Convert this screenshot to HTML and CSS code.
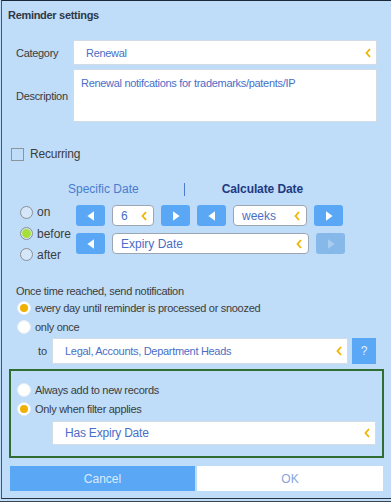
FILE: index.html
```html
<!DOCTYPE html>
<html>
<head>
<meta charset="utf-8">
<link rel="stylesheet" href="styles.css">
</head>
<body>
<div class="frame">
<div class="dialog">
  <div class="title">Reminder settings</div>

  <div class="field">
    <div class="label">Category</div>
    <div class="input sel"><span>Renewal</span><svg class="chev" viewBox="0 0 6 10"><path d="M5 1 L1.5 5 L5 9" /></svg></div>
  </div>
  <div class="field desc">
    <div class="label">Description</div>
    <div class="input area">Renewal notifcations for trademarks/patents/IP</div>
  </div>

  <div class="recurring">
    <span class="check"></span><span class="rtext">Recurring</span>
  </div>

  <div class="tabs">
    <span class="tab">Specific Date</span>
    <span class="sep"></span>
    <span class="tab active">Calculate Date</span>
  </div>

  <div class="datearea">
    <div class="radios">
      <div class="rrow"><span class="radio grey"></span>on</div>
      <div class="rrow"><span class="radio grey on"></span>before</div>
      <div class="rrow"><span class="radio grey"></span>after</div>
    </div>
    <div class="controls">
      <div class="crow">
        <span class="btn"><svg viewBox="0 0 10 10"><path d="M7.5 1 L2 5 L7.5 9Z"/></svg></span>
        <span class="box num"><span>6</span><svg class="chev" viewBox="0 0 6 10"><path d="M5 1 L1.5 5 L5 9" /></svg></span>
        <span class="btn"><svg viewBox="0 0 10 10"><path d="M2.5 1 L8 5 L2.5 9Z"/></svg></span>
        <span class="btn"><svg viewBox="0 0 10 10"><path d="M7.5 1 L2 5 L7.5 9Z"/></svg></span>
        <span class="box unit"><span>weeks</span><svg class="chev" viewBox="0 0 6 10"><path d="M5 1 L1.5 5 L5 9" /></svg></span>
        <span class="btn"><svg viewBox="0 0 10 10"><path d="M2.5 1 L8 5 L2.5 9Z"/></svg></span>
      </div>
      <div class="crow">
        <span class="btn"><svg viewBox="0 0 10 10"><path d="M7.5 1 L2 5 L7.5 9Z"/></svg></span>
        <span class="box field2"><span>Expiry Date</span><svg class="chev" viewBox="0 0 6 10"><path d="M5 1 L1.5 5 L5 9" /></svg></span>
        <span class="btn disabled"><svg viewBox="0 0 10 10"><path d="M2.5 1 L8 5 L2.5 9Z"/></svg></span>
      </div>
    </div>
  </div>

  <div class="notehead">Once time reached, send notification</div>
  <div class="nrow"><span class="radio white on"></span>every day until reminder is processed or snoozed</div>
  <div class="nrow"><span class="radio white"></span>only once</div>

  <div class="torow">
    <span class="tolabel">to</span>
    <div class="input sel to"><span>Legal, Accounts, Department Heads</span><svg class="chev" viewBox="0 0 6 10"><path d="M5 1 L1.5 5 L5 9" /></svg></div>
    <span class="qbtn">?</span>
  </div>

  <div class="filterbox">
    <div class="nrow"><span class="radio white"></span>Always add to new records</div>
    <div class="nrow"><span class="radio white on"></span>Only when filter applies</div>
    <div class="input sel filter"><span>Has Expiry Date</span><svg class="chev" viewBox="0 0 6 10"><path d="M5 1 L1.5 5 L5 9" /></svg></div>
  </div>

  <div class="actions">
    <div class="action cancel">Cancel</div>
    <div class="action ok">OK</div>
  </div>
</div>
</div>
</body>
</html>
```

FILE: styles.css
```css
* { box-sizing: border-box; }
html, body {
  margin: 0;
  padding: 0;
  background: #bfdcf8;
  font-family: "Liberation Sans", Arial, sans-serif;
}
.frame {
  width: 391px;
  height: 502px;
  overflow: hidden;
  padding-left: 1px;
  border-bottom: 1px solid #3a4450;
}
.dialog {
  width: 400px;
  height: 499px;
  background: #bfdcf8;
  border-top: 1px solid #1b2838;
  border-left: 1px solid #4a5560;
  border-bottom: 1px solid #2a3440;
  display: flex;
  flex-direction: column;
}
.title {
  padding: 7px 0 0 6px;
  line-height: 14px;
  font-size: 11px;
  font-weight: bold;
  letter-spacing: -0.3px;
  color: #2e3846;
}
.field {
  display: flex;
  margin-top: 18px;
  padding-left: 14px;
  height: 25px;
}
.field.desc {
  margin-top: 4px;
  height: 53px;
}
.label {
  width: 57px;
  display: flex;
  align-items: center;
  font-size: 11px;
  letter-spacing: -0.3px;
  color: #3c3c3c;
}
.input {
  background: #fff;
  border: 1px solid #d2dce6;
  color: #4a6ec6;
  font-size: 11px;
  letter-spacing: -0.3px;
  display: flex;
  align-items: center;
  padding-left: 12px;
}
.field .input { width: 304px; }
.input.area {
  align-items: flex-start;
  padding-top: 7px;
  padding-left: 7px;
}
.input.sel { justify-content: space-between; padding-right: 5px; }
.chev {
  width: 6px;
  height: 10px;
  fill: none;
  stroke: #f0b400;
  stroke-width: 1.8;
  flex: none;
}
.recurring {
  display: flex;
  align-items: center;
  height: 20px;
  margin-top: 22px;
  padding-left: 9px;
}
.check {
  width: 13px;
  height: 13px;
  border: 1px solid #8c949c;
  margin-right: 6px;
}
.rtext {
  font-size: 12px;
  letter-spacing: -0.2px;
  color: #3c3c3c;
}
.tabs {
  display: flex;
  align-items: center;
  height: 16px;
  margin-top: 17px;
  padding-left: 66px;
  font-size: 12px;
}
.tab { color: #4a7cd0; }
.tab.active { color: #1e3a82; font-weight: bold; letter-spacing: -0.1px; }
.sep {
  width: 1px;
  height: 13px;
  background: #4a7cd0;
  margin-left: 45px;
  margin-right: 37px;
}
.datearea {
  display: flex;
  margin-top: 4px;
}
.radios {
  width: 74px;
  padding-left: 18px;
}
.rrow {
  display: flex;
  align-items: center;
  height: 21px;
  font-size: 12px;
  color: #3c3c3c;
}
.rrow:first-child { height: 22px; }
.radio {
  width: 13px;
  height: 13px;
  border-radius: 50%;
  margin-right: 4px;
  flex: none;
  display: flex;
  align-items: center;
  justify-content: center;
}
.radio.grey {
  border: 1px solid #8a8f96;
  background: #d4e6f8;
}
.radio.grey.on::after {
  content: "";
  width: 9px;
  height: 9px;
  border-radius: 50%;
  background: #a6df3a;
}
.radio.white {
  width: 14px;
  height: 14px;
  background: #fff;
  border: 1px solid #e6eef6;
}
.radio.white.on::after {
  content: "";
  width: 8px;
  height: 8px;
  border-radius: 50%;
  background: #f0b000;
}
.controls {
  padding-top: 4px;
  display: flex;
  flex-direction: column;
  gap: 7px;
}
.crow {
  display: flex;
  gap: 7px;
  height: 21px;
}
.btn {
  width: 29px;
  height: 21px;
  background: #5aa7f5;
  border-radius: 3px;
  display: flex;
  align-items: center;
  justify-content: center;
}
.btn svg { width: 12px; height: 12px; fill: #fff; }
.btn.disabled { background: #86b8ea; }
.btn.disabled svg { fill: #a9cdf0; }
.box {
  background: #fff;
  border: 1px solid #9ca6b2;
  border-radius: 4px;
  display: flex;
  align-items: center;
  justify-content: space-between;
  padding: 0 6px 0 8px;
  font-size: 12px;
  color: #4a6ec6;
}
.box.num { width: 42px; }
.box.unit { width: 74px; }
.box.field2 { width: 197px; }
.notehead {
  margin-top: 19px;
  padding-left: 14px;
  line-height: 14px;
  font-size: 11px;
  letter-spacing: -0.3px;
  color: #3c3c3c;
}
.nrow {
  display: flex;
  align-items: center;
  height: 19px;
  padding-left: 15px;
  font-size: 11px;
  letter-spacing: -0.3px;
  color: #3c3c3c;
}
.torow {
  display: flex;
  align-items: center;
  margin-top: 2px;
  height: 26px;
  padding-left: 36px;
}
.tolabel {
  width: 14px;
  font-size: 11px;
  color: #3c3c3c;
}
.input.to {
  width: 296px;
  height: 26px;
}
.qbtn {
  width: 24px;
  height: 26px;
  margin-left: 4px;
  background: #5aa7f5;
  color: #e4f0fc;
  font-size: 12px;
  display: flex;
  align-items: center;
  justify-content: center;
}
.filterbox {
  margin: 5px 0 0 7px;
  width: 375px;
  height: 89px;
  border: 2px solid #2f6e30;
  padding-top: 9px;
}
.filterbox .nrow { padding-left: 6px; }
.input.filter {
  margin: 3px 0 0 41px;
  width: 324px;
  height: 24px;
  font-size: 12px;
  letter-spacing: -0.2px;
}
.actions {
  display: flex;
  gap: 2px;
  margin-top: 8px;
  padding-left: 8px;
}
.action {
  height: 25px;
  display: flex;
  align-items: center;
  justify-content: center;
  font-size: 12px;
}
.cancel { width: 185px; background: #5aa7f5; color: #dcecfc; }
.ok { width: 186px; background: #fff; color: #86a6d8; }
```
